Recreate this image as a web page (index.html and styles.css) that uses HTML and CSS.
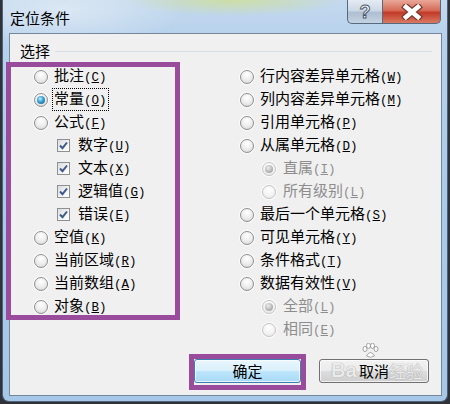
FILE: index.html
```html
<!DOCTYPE html>
<html lang="zh-CN">
<head>
<meta charset="utf-8">
<title>定位条件</title>
<link rel="stylesheet" href="styles.css">
</head>
<body>
<div class="screen">
  <div class="window">
    <div class="titlebar">
      <span class="title">定位条件</span>
      <div class="caps">
        <div class="cap help"><span class="q">?</span></div>
        <div class="cap close">
          <svg width="22" height="16" viewBox="0 0 22 16">
            <path d="M5 3 L17 13 M17 3 L5 13" stroke="#7a3a30" stroke-width="7" stroke-linecap="square" fill="none"/>
            <path d="M5 3 L17 13 M17 3 L5 13" stroke="#ffffff" stroke-width="4.6" stroke-linecap="square" fill="none"/>
          </svg>
        </div>
      </div>
    </div>
    <div class="client">
      <div class="legend"><span class="legend-text">选择</span><span class="gline"></span></div>
      <div class="cols">
        <div class="col">
          <div class="row"><span class="radio"></span><span class="lbl">批注<span class="k">(<u>C</u>)</span></span></div>
          <div class="row"><span class="radio on"></span><span class="lbl focus">常量<span class="k">(<u>O</u>)</span></span></div>
          <div class="row"><span class="radio"></span><span class="lbl">公式<span class="k">(<u>F</u>)</span></span></div>
          <div class="row chk"><span class="check"><svg width="11" height="11" viewBox="0 0 11 11"><path d="M2 5.5 L4.5 8.2 L9 2.5" stroke="#3d5a8a" stroke-width="2" fill="none"/></svg></span><span class="lbl">数字<span class="k">(<u>U</u>)</span></span></div>
          <div class="row chk"><span class="check"><svg width="11" height="11" viewBox="0 0 11 11"><path d="M2 5.5 L4.5 8.2 L9 2.5" stroke="#3d5a8a" stroke-width="2" fill="none"/></svg></span><span class="lbl">文本<span class="k">(<u>X</u>)</span></span></div>
          <div class="row chk"><span class="check"><svg width="11" height="11" viewBox="0 0 11 11"><path d="M2 5.5 L4.5 8.2 L9 2.5" stroke="#3d5a8a" stroke-width="2" fill="none"/></svg></span><span class="lbl">逻辑值<span class="k">(<u>G</u>)</span></span></div>
          <div class="row chk"><span class="check"><svg width="11" height="11" viewBox="0 0 11 11"><path d="M2 5.5 L4.5 8.2 L9 2.5" stroke="#3d5a8a" stroke-width="2" fill="none"/></svg></span><span class="lbl">错误<span class="k">(<u>E</u>)</span></span></div>
          <div class="row"><span class="radio"></span><span class="lbl">空值<span class="k">(<u>K</u>)</span></span></div>
          <div class="row"><span class="radio"></span><span class="lbl">当前区域<span class="k">(<u>R</u>)</span></span></div>
          <div class="row"><span class="radio"></span><span class="lbl">当前数组<span class="k">(<u>A</u>)</span></span></div>
          <div class="row"><span class="radio"></span><span class="lbl">对象<span class="k">(<u>B</u>)</span></span></div>
        </div>
        <div class="col">
          <div class="row"><span class="radio"></span><span class="lbl">行内容差异单元格<span class="k">(<u>W</u>)</span></span></div>
          <div class="row"><span class="radio"></span><span class="lbl">列内容差异单元格<span class="k">(<u>M</u>)</span></span></div>
          <div class="row"><span class="radio"></span><span class="lbl">引用单元格<span class="k">(<u>P</u>)</span></span></div>
          <div class="row"><span class="radio"></span><span class="lbl">从属单元格<span class="k">(<u>D</u>)</span></span></div>
          <div class="row sub"><span class="radio dis on"></span><span class="lbl dim">直属<span class="k">(<u>I</u>)</span></span></div>
          <div class="row sub"><span class="radio dis"></span><span class="lbl dim">所有级别<span class="k">(<u>L</u>)</span></span></div>
          <div class="row"><span class="radio"></span><span class="lbl">最后一个单元格<span class="k">(<u>S</u>)</span></span></div>
          <div class="row"><span class="radio"></span><span class="lbl">可见单元格<span class="k">(<u>Y</u>)</span></span></div>
          <div class="row"><span class="radio"></span><span class="lbl">条件格式<span class="k">(<u>T</u>)</span></span></div>
          <div class="row"><span class="radio"></span><span class="lbl">数据有效性<span class="k">(<u>V</u>)</span></span></div>
          <div class="row sub"><span class="radio dis on"></span><span class="lbl dim">全部<span class="k">(<u>L</u>)</span></span></div>
          <div class="row sub"><span class="radio dis"></span><span class="lbl dim">相同<span class="k">(<u>E</u>)</span></span></div>
        </div>
      </div>
      <div class="buttons">
        <button class="btn ok">确定</button>
        <button class="btn cancel">取消</button>
      </div>
    </div>
  </div>
  <div class="mark mark-left"></div>
  <div class="mark mark-ok"></div>
  <span class="wm wm-bai">Ba</span>
  <svg class="paw" width="18" height="16" viewBox="0 0 18 16">
    <g fill="rgba(255,255,255,0.85)" stroke="rgba(120,120,120,0.8)" stroke-width="0.8">
      <ellipse cx="4" cy="6" rx="2" ry="2.6"/>
      <ellipse cx="7.5" cy="2.8" rx="2" ry="2.6"/>
      <ellipse cx="11.5" cy="2.8" rx="2" ry="2.6"/>
      <ellipse cx="15" cy="6" rx="2" ry="2.6"/>
      <path d="M5.5 13 Q9.5 6 13.5 13 Q9.5 15.5 5.5 13 Z"/>
    </g>
  </svg>
  <span class="wm wm-jy">经验</span>
</div>
</body>
</html>
```
FILE: styles.css
```css
html, body {
  margin: 0;
  padding: 0;
}
body {
  font-family: "Noto Sans CJK SC", "Noto Sans", sans-serif;
  background: #2d2d2d;
}
.screen {
  position: relative;
  width: 450px;
  height: 404px;
  overflow: hidden;
  background: #2f3238;
}
.window {
  margin-left: 2px;
  width: 446px;
  height: 402px;
  box-sizing: border-box;
  border: 1px solid #4e6177;
  border-top: 0;
  border-radius: 0 0 7px 7px;
  padding: 0 5px 5px 6px;
  display: flex;
  flex-direction: column;
  background:
    radial-gradient(ellipse 110px 16px at 230px 0px, rgba(205, 222, 160, 0.95), rgba(205, 222, 160, 0)),
    radial-gradient(ellipse 120px 40px at 60px 10px, rgba(225, 235, 245, 0.8), rgba(225, 235, 245, 0)),
    linear-gradient(180deg, #c4d9ee 0, #b6d1ec 40px, #aacaea 200px, #a6c7e8 100%);
}
.titlebar {
  height: 33px;
  flex: none;
  display: flex;
  align-items: flex-start;
}
.title {
  margin: 8px 0 0 1px;
  font-size: 15px;
  line-height: 20px;
  color: #000;
}
.caps {
  margin-left: auto;
  margin-right: 1px;
  display: flex;
}
.cap {
  height: 24px;
  box-sizing: border-box;
  border: 1px solid #56697f;
  border-top: 0;
  display: flex;
  align-items: center;
  justify-content: center;
}
.help {
  width: 35px;
  border-right: 0;
  border-radius: 0 0 0 5px;
  background: linear-gradient(180deg, #e4ebf3 0, #cdd9e6 45%, #aebfd1 55%, #c3d3e3 100%);
}
.q {
  font: bold 18px/20px "Liberation Sans", sans-serif;
  color: #fff;
  -webkit-text-stroke: 1px #4a5768;
}
.close {
  width: 59px;
  border-radius: 0 0 5px 0;
  background: linear-gradient(180deg, #e9a899 0, #d56b57 45%, #c23a28 55%, #d97a62 100%);
}
.close svg {
  display: block;
}
.client {
  flex: 1;
  border: 1px solid #75879a;
  background: #f0f0f0;
  display: flex;
  flex-direction: column;
}
.legend {
  display: flex;
  align-items: center;
  height: 18px;
  margin-top: 8px;
}
.legend-text {
  margin-left: 10px;
  font-size: 15px;
  line-height: 18px;
  color: #000;
}
.gline {
  flex: 1;
  height: 1px;
  background: #d5dfe5;
  margin: 0 9px 0 5px;
}
.cols {
  display: grid;
  grid-template-columns: 206px 1fr;
  padding-left: 24px;
  margin-top: 5px;
}
.row {
  height: 23px;
  display: flex;
  align-items: center;
  font-size: 15px;
  color: #000;
}
.row.sub {
  padding-left: 22px;
}
.row.chk {
  padding-left: 23px;
}
.radio {
  position: relative;
  flex: none;
  width: 14px;
  height: 14px;
  box-sizing: border-box;
  border-radius: 50%;
  border: 1px solid #8f9091;
  background: radial-gradient(circle at 50% 30%, #ffffff 0, #ececec 55%, #d0d0d0 100%);
  box-shadow: 0 0 0 1px rgba(255, 255, 255, 0.75);
  margin-right: 6px;
}
.row.sub .radio {
  margin-right: 7px;
}
.radio.on::after {
  content: "";
  position: absolute;
  inset: 2px;
  border-radius: 50%;
  background: radial-gradient(circle at 40% 35%, #c2f0ff 0, #3fa8d9 40%, #0f4f78 100%);
}
.radio.dis {
  border-color: #c4c4c4;
  background: radial-gradient(circle at 50% 30%, #ffffff 0, #f2f2f2 60%, #e2e2e2 100%);
}
.radio.dis.on::after {
  background: radial-gradient(circle at 40% 35%, #eeeeee 0, #b4b4b4 60%, #8f8f8f 100%);
}
.check {
  flex: none;
  width: 13px;
  height: 13px;
  box-sizing: border-box;
  border: 1px solid #8e8f8f;
  background: linear-gradient(135deg, #d8dbe0 0, #f4f4f4 60%, #ffffff 100%);
  margin-right: 8px;
  display: flex;
  align-items: center;
  justify-content: center;
}
.check svg {
  display: block;
}
.lbl {
  display: inline-block;
  line-height: 16px;
  white-space: nowrap;
}
.lbl.dim {
  color: #8d8d8d;
}
.focus {
  outline: 1px dotted #000;
  outline-offset: 1px;
}
.k {
  font-family: "Liberation Mono", monospace;
  font-size: 12.5px;
}
.buttons {
  display: flex;
  justify-content: flex-end;
  gap: 18px;
  padding-right: 12px;
  margin-top: 18px;
}
.btn {
  height: 24px;
  box-sizing: border-box;
  padding: 0;
  font: 15px/20px "Noto Sans CJK SC", sans-serif;
  color: #000;
  border: 1px solid #707070;
  border-radius: 3px;
  background: linear-gradient(180deg, #f2f2f2 0, #ebebeb 48%, #dddddd 52%, #cfcfcf 100%);
  box-shadow: inset 0 0 0 1px rgba(255, 255, 255, 0.7);
}
.ok {
  width: 107px;
  border-color: #3c7fb1;
  background: linear-gradient(180deg, #eaf6fd 0, #d9f0fc 48%, #bee6fd 52%, #a7d9f5 100%);
}
.cancel {
  width: 110px;
}
.mark {
  position: absolute;
  box-sizing: border-box;
  border: 5px solid #9a4c9c;
  pointer-events: none;
}
.mark-left {
  left: 6px;
  top: 62px;
  width: 174px;
  height: 258px;
}
.mark-ok {
  left: 189px;
  top: 354px;
  width: 117px;
  height: 36px;
}
.wm {
  position: absolute;
  color: rgba(255, 255, 255, 0.85);
  text-shadow: 0 0 1px rgba(110, 110, 110, 0.9);
  pointer-events: none;
}
.wm-bai {
  left: 331px;
  top: 359px;
  font: bold 20px/22px "Liberation Sans", sans-serif;
}
.paw {
  position: absolute;
  left: 361px;
  top: 343px;
}
.wm-jy {
  left: 389px;
  top: 360px;
  font: 17px/22px "Noto Sans CJK SC", sans-serif;
}
```
